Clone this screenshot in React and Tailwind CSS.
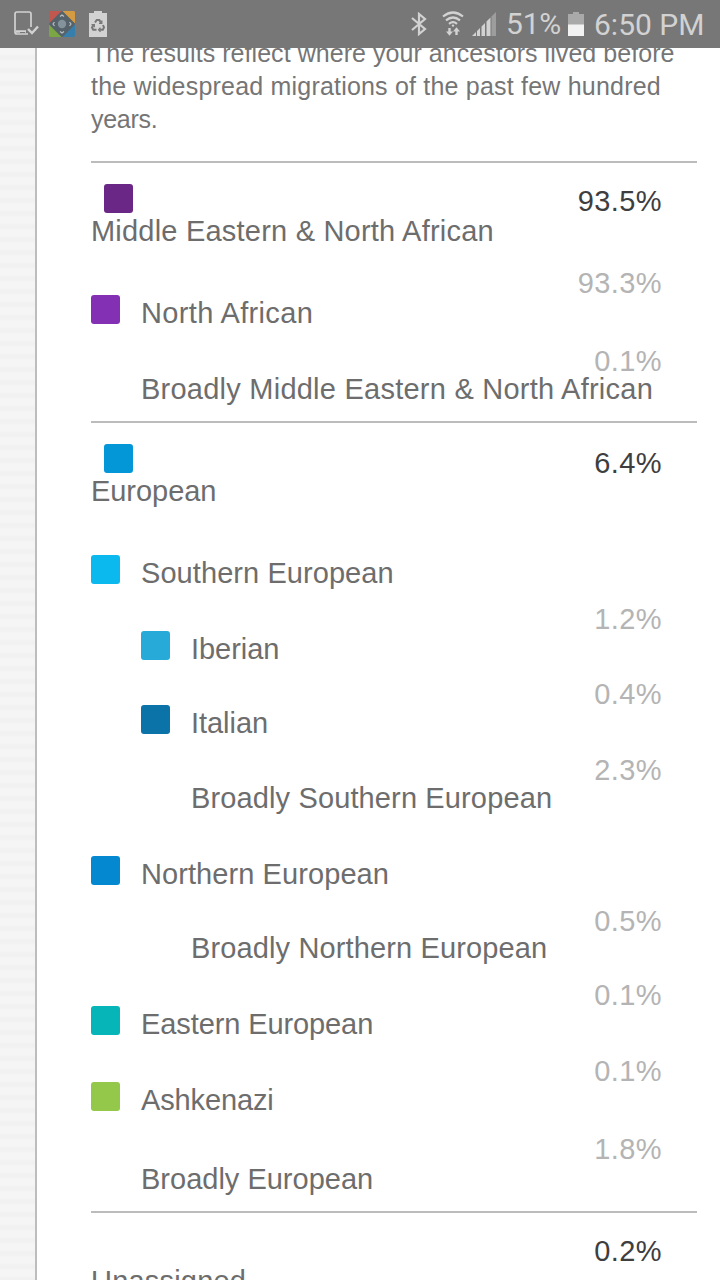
import React from 'react';

const label = "font-['Liberation_Sans',sans-serif] text-[29px] leading-[32px] whitespace-nowrap text-[#6d6d6d]";
const pct = "ml-auto mr-[35px] shrink-0 font-['Liberation_Sans',sans-serif] text-[29px] leading-[32px] tracking-[0.4px]";

const sections = [
  {
    name: 'Middle Eastern & North African', value: '93.5%', swatch: 'bg-[#6a2785]', pctPos: 'mt-[22px]', fit: 'tracking-[0.21px]', height: 'h-[102px]',
    rows: [
      { name: 'North African', value: '93.3%', swatch: 'bg-[#8430b4]', height: 'h-[76px]', indent: 'pl-0', pctPos: 'mt-[4px]', fit: 'tracking-[0.35px]' },
      { name: 'Broadly Middle Eastern & North African', value: '0.1%', height: 'h-[82px]', indent: 'pl-[50px]', pctPos: 'mt-[6px]', fit: 'tracking-[0.24px]' },
    ],
  },
  {
    name: 'European', value: '6.4%', swatch: 'bg-[#0497d8]', pctPos: 'mt-[24px]', height: 'h-[102px]', fit: 'tracking-[-0.05px]',
    rows: [
      { name: 'Southern European', swatch: 'bg-[#0cb9ee]', height: 'h-[76px]', indent: 'pl-0', fit: 'tracking-[0.07px]' },
      { name: 'Iberian', value: '1.2%', swatch: 'bg-[#27aad8]', height: 'h-[74px]', indent: 'pl-[50px]', pctPos: 'mt-[4px]', fit: 'tracking-[-0.05px]' },
      { name: 'Italian', value: '0.4%', swatch: 'bg-[#0b73a7]', height: 'h-[75px]', indent: 'pl-[50px]', pctPos: 'mt-[5px]', fit: 'tracking-[-0.05px]' },
      { name: 'Broadly Southern European', value: '2.3%', height: 'h-[76px]', indent: 'pl-[100px]', pctPos: 'mt-[6px]', fit: 'tracking-[0.13px]' },
      { name: 'Northern European', swatch: 'bg-[#0489d0]', height: 'h-[74px]', indent: 'pl-0', fit: 'tracking-[0.08px]' },
      { name: 'Broadly Northern European', value: '0.5%', height: 'h-[76px]', indent: 'pl-[100px]', pctPos: 'mt-[7px]', fit: 'tracking-[0.13px]' },
      { name: 'Eastern European', value: '0.1%', swatch: 'bg-[#05b5b7]', height: 'h-[76px]', indent: 'pl-0', pctPos: 'mt-[5px]', fit: 'tracking-[-0.1px]' },
      { name: 'Ashkenazi', value: '0.1%', swatch: 'bg-[#93c84a]', height: 'h-[79px]', indent: 'pl-0', pctPos: 'mt-[5px]', fit: 'tracking-[-0.13px]' },
      { name: 'Broadly European', value: '1.8%', height: 'h-[82px]', indent: 'pl-[50px]', pctPos: 'mt-[4px]', fit: 'tracking-[0px]' },
    ],
  },
  { name: 'Unassigned', value: '0.2%', pctPos: 'mt-[22px]', height: 'h-[102px]', fit: 'tracking-[0.2px]', rows: [] },
];

function Row({ row }) {
  return (
    <div className={`flex items-start ${row.height} ${row.indent}`}>
      {row.swatch && <span className={`mt-[32px] mr-[21px] size-[29px] shrink-0 rounded-[3px] ${row.swatch}`} />}
      <span className={`mt-[34px] w-0 overflow-visible ${label} ${row.fit}`}>{row.name}</span>
      {row.value && <span className={`${pct} ${row.pctPos} text-[#b4b4b4]`}>{row.value}</span>}
    </div>
  );
}

function Section({ section }) {
  return (
    <section>
      <div className={`flex items-start border-t-2 border-[#bcbcbc] ${section.height}`}>
        <div className="flex flex-col">
          <span className={`mt-[21px] ml-[13px] size-[29px] rounded-[3px] ${section.swatch || ''}`} />
          <span className={`mt-[2px] ${label} ${section.fit}`}>{section.name}</span>
        </div>
        <span className={`${pct} ${section.pctPos} text-[#3e3e3e]`}>{section.value}</span>
      </div>
      {section.rows.map((row) => <Row key={row.name} row={row} />)}
    </section>
  );
}

function StatusBar() {
  return (
    <header className="flex h-[48px] shrink-0 items-center bg-[#777777] pl-[14px] text-[#d2d2d2]">
      <svg className="h-[26px] w-[26px] shrink-0" viewBox="0 0 26 26" fill="none" stroke="currentColor" strokeWidth="1.7">
        <path d="M14 23H3Q1 23 1 21V3Q1 1 3 1H15Q17 1 17 3V16" />
        <path d="M2 20.5H12M14 18L18 22L24 15.5" strokeWidth="2.4" />
        <path d="M6 21.5H11" stroke="#777777" strokeWidth="1" />
      </svg>
      <svg className="ml-[9px] h-[26px] w-[26px] shrink-0" viewBox="0 0 26 26">
        <path d="M1 0H12V13H0V1Z" fill="#c1584f" />
        <path d="M14 0H25L26 1V12H14Z" fill="#d59b42" />
        <path d="M0 14H12V26H1L0 25Z" fill="#7aa644" />
        <path d="M14 14H26V25L25 26H14Z" fill="#367fac" />
        <path d="M11.5 1Q13 -.5 14.5 1L25 11.5Q26.5 13 25 14.5L14.5 25Q13 26.5 11.5 25L1 14.5Q-.5 13 1 11.5Z" fill="#56626a" />
        <circle cx="13" cy="13" r="4.2" fill="#84939b" />
        <path d="M11 5.5L13 4L15 5.5M11 20.5L13 22L15 20.5M5.5 11L4 13L5.5 15M20.5 11L22 13L20.5 15" fill="none" stroke="#b8c0c4" strokeWidth="1.2" />
      </svg>
      <svg className="ml-[14px] h-[26px] w-[18px] shrink-0" viewBox="0 0 18 26">
        <path d="M0 2H5V0H13V2H18V26H0Z" fill="#d2d2d2" />
        <g fill="none" stroke="#777777" strokeWidth="2">
          <path d="M6 11.5L7.7 9H10.3L12 11.8M14 14L15 16.5L13.8 18.8H10.5M7.5 18.8H4.2L3 16.5L4.5 14" />
          <path d="M12.8 9.5V12.3H10M11.5 16.8L9.6 18.8L11.5 20.8M2.5 13.7H5.3V16.2" strokeWidth="1.3" />
        </g>
      </svg>
      <svg className="ml-[304px] h-[24px] w-[16px] shrink-0" viewBox="0 0 16 24" fill="none" stroke="currentColor" strokeWidth="2.2">
        <path d="M1 6L14 17L8 22V2L14 7L1 18" />
      </svg>
      <svg className="ml-[15px] h-[26px] w-[22px] shrink-0" viewBox="0 0 22 26" fill="none" stroke="currentColor" strokeWidth="2.2">
        <path d="M1 5.5Q11 -2.5 21 5.5M4 9.3Q11 3.7 18 9.3M7 12.8Q11 9.6 15 12.8" />
        <circle cx="11" cy="14.6" r="1.2" fill="currentColor" stroke="none" />
        <path d="M7.5 17V22M14.5 24V19" strokeWidth="2.4" />
        <path d="M4 20.5H11L7.5 24.8ZM11 20.5H18L14.5 16.2Z" fill="currentColor" stroke="none" />
      </svg>
      <svg className="ml-[8px] h-[24px] w-[24px] shrink-0" viewBox="0 0 24 24">
        <path d="M0 24L4 20V24ZM5 19L8 16V24H5ZM9.5 14.5L13 11V24H9.5ZM14.5 9.5L18.5 5.5V24H14.5Z" fill="#d2d2d2" />
        <path d="M19.5 4.5L24 0V24H19.5Z" fill="#9d9d9d" />
      </svg>
      <span className="ml-[10px] w-[56px] shrink-0 font-['Roboto',sans-serif] text-[30px] leading-[48px] tracking-[-0.2px] whitespace-nowrap">51%</span>
      <svg className="ml-[6px] h-[24px] w-[16px] shrink-0" viewBox="0 0 16 24">
        <path d="M0 2H5V0H11V2H16V13H0Z" fill="#a9a9a9" />
        <path d="M0 12.5H16V24H0Z" fill="#f2f2f2" />
      </svg>
      <span className="ml-[10px] mt-[2px] font-['Roboto',sans-serif] text-[30px] leading-[48px] whitespace-nowrap">6:50 PM</span>
    </header>
  );
}

export default function App() {
  return (
    <div className="flex h-[1280px] w-[720px] flex-col overflow-hidden bg-white">
      <StatusBar />
      <div className="flex min-h-0 flex-1">
        <aside className="w-[37px] shrink-0 border-r-2 border-[#bdbdbd] bg-[repeating-linear-gradient(180deg,#f5f5f5_0px,#f5f5f5_6px,#f1f1f1_8px,#f1f1f1_11px,#f5f5f5_13px)]" />
        <main className="w-[660px] shrink-0 overflow-hidden pl-[54px]">
          <p className="-mt-[11px] mb-[25px] h-[99px] font-['Liberation_Sans',sans-serif] text-[25px] leading-[33px] tracking-[0.2px] whitespace-nowrap text-[#757575]">
            <span className="tracking-[0.05px]">The results reflect where your ancestors lived before</span><br />
            the widespread migrations of the past few hundred<br />
            <span className="tracking-[-0.3px]">years.</span>
          </p>
          {sections.map((section) => <Section key={section.name} section={section} />)}
        </main>
      </div>
    </div>
  );
}
